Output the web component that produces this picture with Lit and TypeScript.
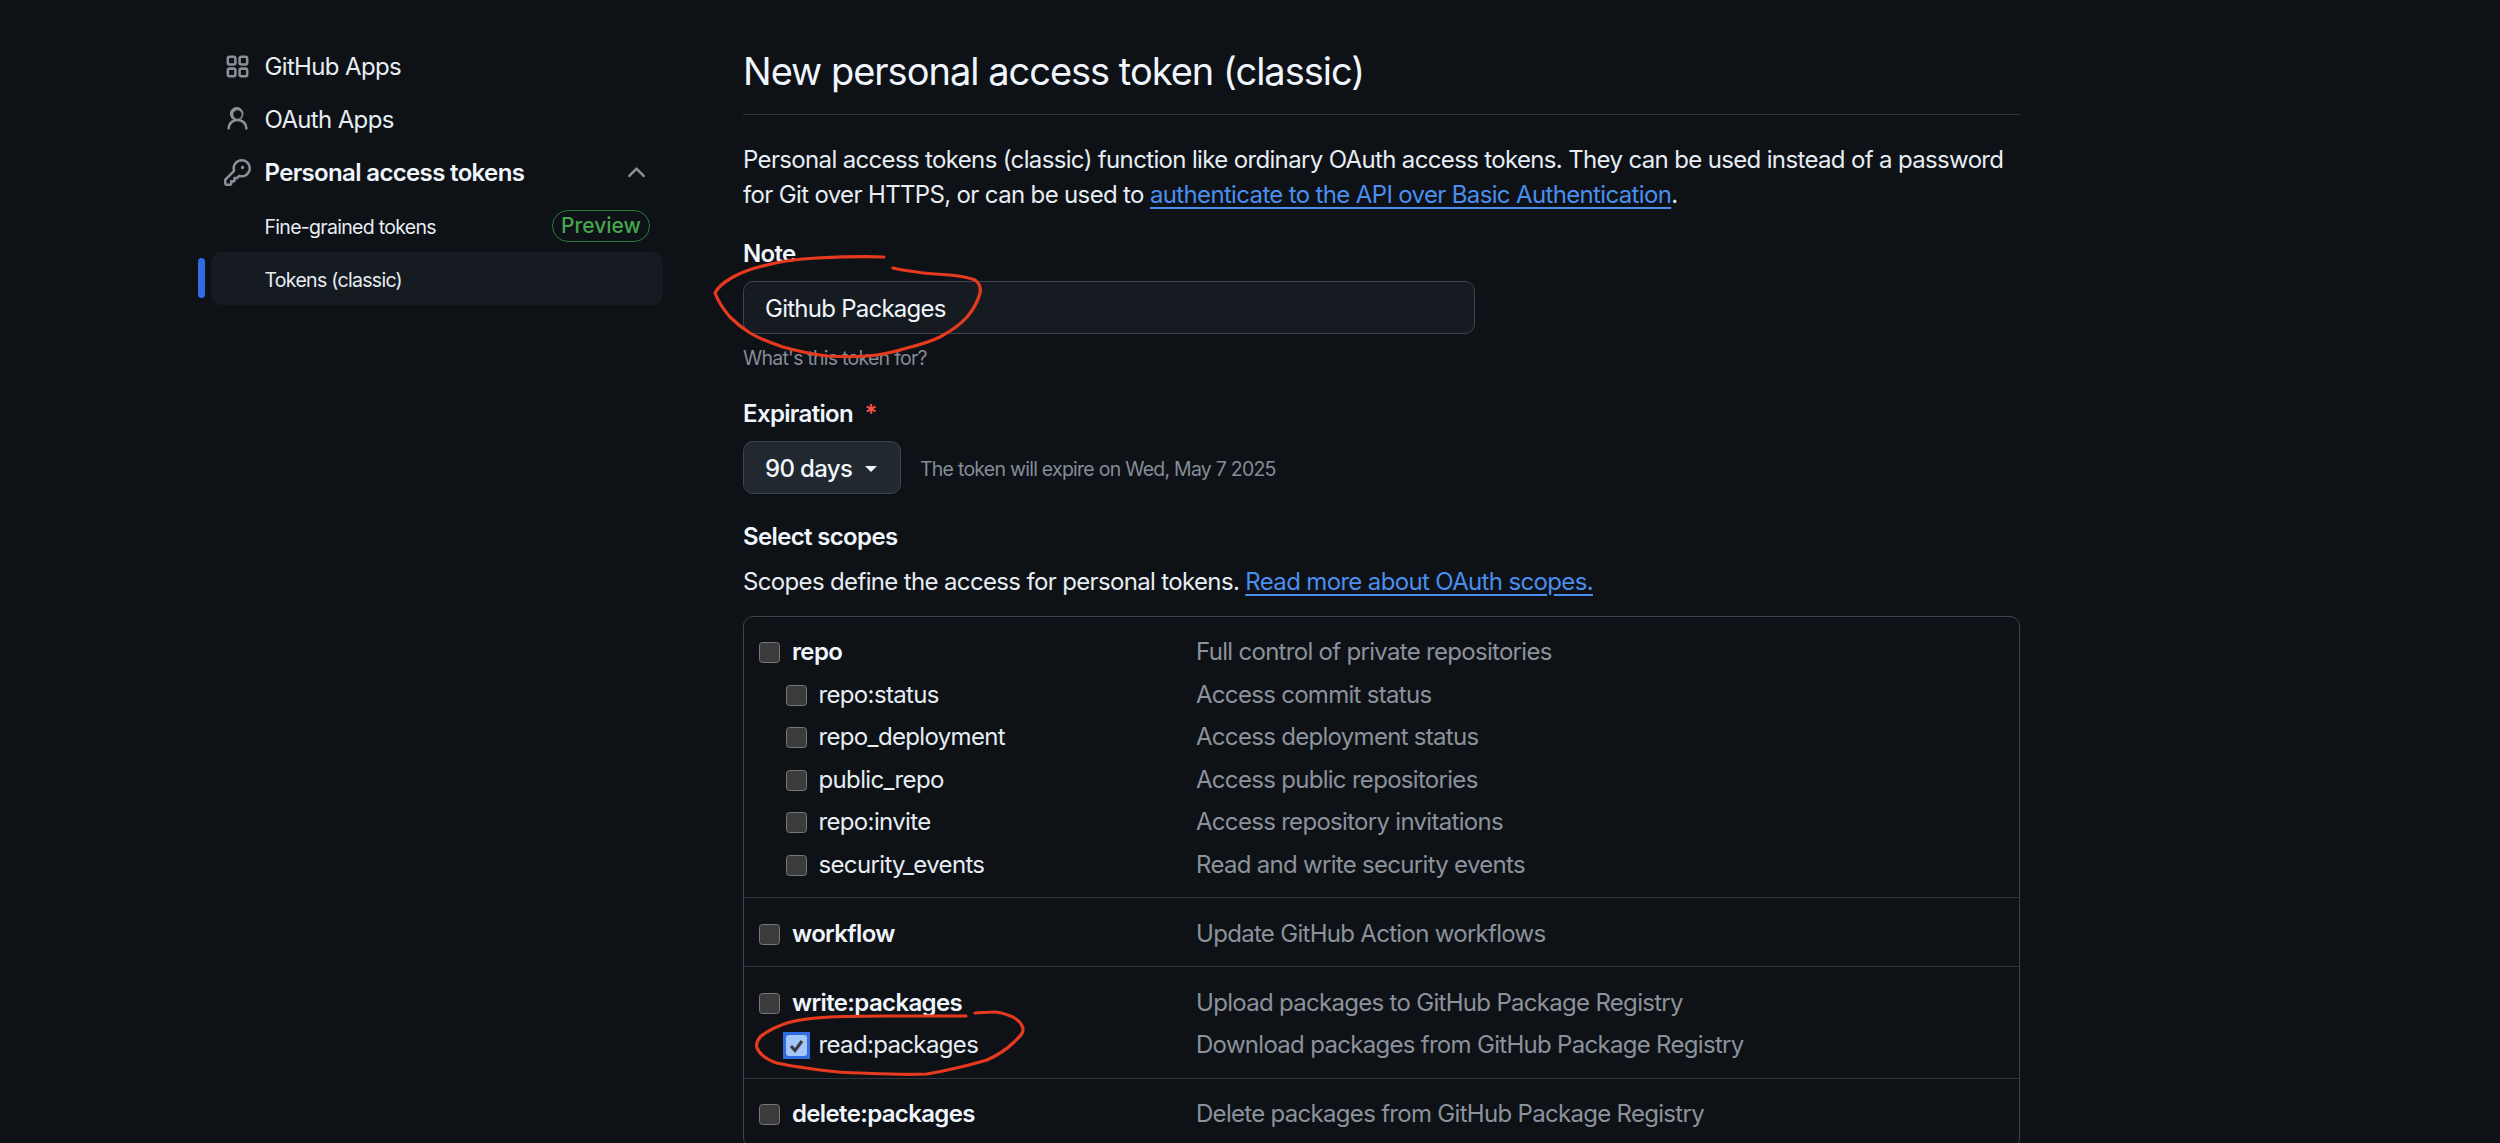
import { html, css, svg, LitElement } from "lit";
import { customElement } from "lit/decorators.js";

const ICONS = {
  apps: "M1.5 3.25c0-.966.784-1.75 1.75-1.75h2.5c.966 0 1.75.784 1.75 1.75v2.5A1.75 1.75 0 0 1 5.75 7.5h-2.5A1.75 1.75 0 0 1 1.5 5.75Zm7 0c0-.966.784-1.75 1.75-1.75h2.5c.966 0 1.75.784 1.75 1.75v2.5a1.75 1.75 0 0 1-1.75 1.75h-2.5A1.75 1.75 0 0 1 8.5 5.75Zm-7 7c0-.966.784-1.75 1.75-1.75h2.5c.966 0 1.75.784 1.75 1.75v2.5a1.75 1.75 0 0 1-1.75 1.75h-2.5a1.75 1.75 0 0 1-1.75-1.75Zm7 0c0-.966.784-1.75 1.75-1.75h2.5c.966 0 1.75.784 1.75 1.75v2.5a1.75 1.75 0 0 1-1.75 1.75h-2.5a1.75 1.75 0 0 1-1.75-1.75ZM3.25 3a.25.25 0 0 0-.25.25v2.5c0 .138.112.25.25.25h2.5A.25.25 0 0 0 6 5.75v-2.5A.25.25 0 0 0 5.75 3Zm7 0a.25.25 0 0 0-.25.25v2.5c0 .138.112.25.25.25h2.5a.25.25 0 0 0 .25-.25v-2.5a.25.25 0 0 0-.25-.25ZM3 10.25v2.5c0 .138.112.25.25.25h2.5a.25.25 0 0 0 .25-.25v-2.5a.25.25 0 0 0-.25-.25h-2.5a.25.25 0 0 0-.25.25Zm7.25-.25a.25.25 0 0 0-.25.25v2.5c0 .138.112.25.25.25h2.5a.25.25 0 0 0 .25-.25v-2.5a.25.25 0 0 0-.25-.25Z",
  person: "M10.561 8.073a6.005 6.005 0 0 1 3.432 5.142.75.75 0 1 1-1.498.07 4.5 4.5 0 0 0-8.99 0 .75.75 0 0 1-1.498-.07 6.004 6.004 0 0 1 3.431-5.142 3.999 3.999 0 1 1 4.123 0ZM10.5 5a2.5 2.5 0 1 0-5 0 2.5 2.5 0 0 0 5 0Z",
  key: "M10.5 0a5.499 5.499 0 1 1-1.288 10.848l-.932.932a.749.749 0 0 1-.53.22H7v.75a.749.749 0 0 1-.22.53l-.5.5a.749.749 0 0 1-.53.22H5v.75a.749.749 0 0 1-.22.53l-.5.5a.749.749 0 0 1-.53.22h-2A1.75 1.75 0 0 1 0 14.25v-2c0-.199.079-.389.22-.53l4.932-4.932A5.5 5.5 0 0 1 10.5 0Zm-4 5.5c-.001.431.069.86.205 1.269a.75.75 0 0 1-.181.768L1.5 12.56v1.69c0 .138.112.25.25.25h1.69l.06-.06v-1.19a.75.75 0 0 1 .75-.75h1.19l.06-.06v-1.19a.75.75 0 0 1 .75-.75h1.19l1.023-1.025a.75.75 0 0 1 .768-.18A4 4 0 1 0 6.5 5.5ZM11 6a1 1 0 1 1 0-2 1 1 0 0 1 0 2Z",
  chevron: "M3.22 10.53a.749.749 0 0 1 0-1.06l4.25-4.25a.749.749 0 0 1 1.06 0l4.25 4.25a.749.749 0 1 1-1.06 1.06L8 6.811 4.28 10.53a.749.749 0 0 1-1.06 0Z",
};

type Scope = { name: string; desc: string; sub?: boolean; checked?: boolean };

const GROUPS: Scope[][] = [
  [
    { name: "repo", desc: "Full control of private repositories" },
    { name: "repo:status", desc: "Access commit status", sub: true },
    { name: "repo_deployment", desc: "Access deployment status", sub: true },
    { name: "public_repo", desc: "Access public repositories", sub: true },
    { name: "repo:invite", desc: "Access repository invitations", sub: true },
    { name: "security_events", desc: "Read and write security events", sub: true },
  ],
  [{ name: "workflow", desc: "Update GitHub Action workflows" }],
  [
    { name: "write:packages", desc: "Upload packages to GitHub Package Registry" },
    { name: "read:packages", desc: "Download packages from GitHub Package Registry", sub: true, checked: true },
  ],
  [{ name: "delete:packages", desc: "Delete packages from GitHub Package Registry" }],
];

const icon = (d: string) => html`<svg class="icon" viewBox="0 0 16 16" aria-hidden="true"><path d=${d}></path></svg>`;

@customElement("app-root")
export class AppRoot extends LitElement {
  static styles = css`
    :host {
      display: block;
      position: relative;
      height: 1143px;
      overflow: hidden;
      background: #0e1116;
      color: #f0f6fc;
      font-family: Inter, "Liberation Sans", sans-serif;
      font-size: 24px;
      letter-spacing: -0.65px;
    }

    .page {
      display: flex;
      gap: 80px;
      padding-left: 198px;
    }

    /* sidebar */
    .side {
      width: 465px;
      flex: none;
      padding-top: 40px;
    }
    .nav-row {
      display: flex;
      align-items: center;
      gap: 13.5px;
      height: 53px;
      margin-left: 13px;
      padding: 0 13px;
      border-radius: 10px;
      color: #e6edf3;
      box-sizing: border-box;
    }
    .nav-row .icon {
      width: 27px;
      height: 27px;
      flex: none;
      fill: #8b8f96;
    }
    .nav-row.open {
      font-weight: 600;
      color: #f0f6fc;
    }
    .nav-row .chevron {
      margin-left: auto;
    }
    .sub {
      font-size: 19.5px;
      padding-left: 53.5px;
      letter-spacing: -0.7px;
    }
    .sub .txt {
      padding-top: 2px;
    }
    .badge {
      margin-left: auto;
      height: 32px;
      width: 98px;
      box-sizing: border-box;
      border: 1.5px solid #2c7a39;
      border-radius: 16px;
      color: #46a64f;
      font-size: 21px;
      letter-spacing: 0;
      font-weight: 500;
      display: flex;
      align-items: center;
      justify-content: center;
    }
    .sub-wrap {
      position: relative;
    }
    .active {
      background: #161b22;
    }
    .marker {
      position: absolute;
      left: 0;
      top: 6px;
      width: 7px;
      height: 40px;
      border-radius: 4px;
      background: #2f6de0;
    }

    /* main column */
    .main {
      width: 1277px;
      flex: none;
      padding-top: 46px;
    }
    h1 {
      margin: 0;
      font-size: 38px;
      letter-spacing: -1px;
      font-weight: 400;
      line-height: 50px;
      padding-bottom: 18px;
      border-bottom: 1.5px solid #30363d;
    }
    p {
      margin: 27px 0 0;
      line-height: 35px;
      color: #e6edf3;
    }
    p.intro {
      margin-top: 11px;
    }
    a {
      color: #4a8fee;
      text-decoration: underline;
      text-underline-offset: 4px;
    }
    .label {
      font-weight: 600;
      line-height: 32px;
      padding-top: 3px;
      margin-top: 23px;
    }
    .label.next {
      margin-top: 24px;
    }
    .input {
      margin-top: 11px;
      width: 732px;
      height: 53px;
      box-sizing: border-box;
      padding: 2px 21px 0;
      display: flex;
      align-items: center;
      background: #161b22;
      border: 1.5px solid #3d444d;
      border-radius: 10px;
      letter-spacing: -0.75px;
    }
    .help {
      margin-top: 9px;
      padding-top: 2px;
      line-height: 26px;
      font-size: 19.5px;
      letter-spacing: -0.75px;
      color: #848d97;
    }
    .req {
      color: #f85149;
      margin-left: 6px;
    }
    .expiry {
      margin-top: 11px;
      display: flex;
      align-items: center;
      gap: 19px;
    }
    .select {
      width: 158px;
      height: 53px;
      box-sizing: border-box;
      padding: 2px 21px 0;
      display: flex;
      align-items: center;
      gap: 13px;
      white-space: nowrap;
      background: #212830;
      border: 1.5px solid #3d444d;
      border-radius: 10px;
      font-weight: 500;
    }
    .caret {
      width: 0;
      height: 0;
      border: 6.5px solid transparent;
      border-top-color: #f0f6fc;
      border-bottom: 0;
    }
    .expiry .help {
      margin-top: 0;
    }

    /* scopes table */
    .scopes {
      margin-top: 16.5px;
      border: 1.5px solid #3d444d;
      border-radius: 10px;
    }
    .group {
      padding: 14px 0 11.5px;
      border-top: 1.5px solid #30363d;
    }
    .group:first-child {
      border-top: 0;
    }
    .scope {
      display: grid;
      grid-template-columns: 437px 1fr;
      height: 42.5px;
      align-items: center;
      padding-left: 15px;
      color: #e6edf3;
    }
    .scope .name {
      display: flex;
      align-items: center;
      gap: 12px;
      font-weight: 600;
      color: #f0f6fc;
    }
    .scope.sub-scope .name {
      padding-left: 26.5px;
      font-weight: 400;
      color: #e6edf3;
    }
    .desc {
      color: #8b929b;
      letter-spacing: -0.7px;
    }
    .box {
      width: 21px;
      height: 21px;
      box-sizing: border-box;
      flex: none;
      margin-top: 2px;
      background: #3b3b3b;
      border: 1.5px solid #777;
      border-radius: 3.5px;
    }
    .box.checked {
      background: #2f6de0;
      border: 0;
      border-radius: 0;
      outline: 3.5px solid #2f6de0;
    }
    .box.checked svg {
      display: block;
      width: 21px;
      height: 21px;
    }

    /* hand-drawn marks */
    .marks {
      position: absolute;
      inset: 0;
      width: 2500px;
      height: 1143px;
      pointer-events: none;
      fill: none;
      stroke: #e63a1f;
      stroke-width: 3.2;
      stroke-linecap: round;
      stroke-linejoin: round;
    }
  `;

  renderScope(s: Scope) {
    return html`
      <div class="scope ${s.sub ? "sub-scope" : ""}">
        <div class="name">
          <span class="box ${s.checked ? "checked" : ""}">
            ${s.checked
              ? html`<svg viewBox="0 0 21 21">
                  <rect width="21" height="21" rx="3" fill="#a4c7fb"></rect>
                  <path d="M5 11l4 4.5 7-9.5" fill="none" stroke="#3b3b3b" stroke-width="3"></path>
                </svg>`
              : ""}
          </span>
          ${s.name}
        </div>
        <div class="desc">${s.desc}</div>
      </div>
    `;
  }

  render() {
    return html`
      <div class="page">
        <nav class="side">
          <div class="nav-row">${icon(ICONS.apps)}GitHub Apps</div>
          <div class="nav-row">${icon(ICONS.person)}OAuth Apps</div>
          <div class="nav-row open">
            ${icon(ICONS.key)}Personal access tokens
            <svg class="icon chevron" viewBox="0 0 16 16"><path d=${ICONS.chevron}></path></svg>
          </div>
          <div class="nav-row sub"><span class="txt">Fine-grained tokens</span><span class="badge">Preview</span></div>
          <div class="sub-wrap">
            <span class="marker"></span>
            <div class="nav-row sub active"><span class="txt">Tokens (classic)</span></div>
          </div>
        </nav>
        <main class="main">
          <h1>New personal access token (classic)</h1>
          <p>
            Personal access tokens (classic) function like ordinary OAuth access tokens. They can be used instead of a
            password<br />for Git over HTTPS, or can be used to
            <a>authenticate to the API over Basic Authentication</a>.
          </p>
          <div class="label">Note</div>
          <div class="input">Github Packages</div>
          <div class="help">What's this token for?</div>
          <div class="label next">Expiration <span class="req">*</span></div>
          <div class="expiry">
            <div class="select">90 days<span class="caret"></span></div>
            <div class="help">The token will expire on Wed, May 7 2025</div>
          </div>
          <div class="label next">Select scopes</div>
          <p class="intro">Scopes define the access for personal tokens. <a>Read more about OAuth scopes.</a></p>
          <div class="scopes">
            ${GROUPS.map((g) => html`<div class="group">${g.map((s) => this.renderScope(s))}</div>`)}
          </div>
        </main>
      </div>
      <svg class="marks" viewBox="0 0 2500 1143">
        ${svg`<path d="M884 257C860 256 838 257 817 258C798 259 782 261 767 265C754 268 742 272 733 277C724 282 718 287 715 293C718 301 723 309 730 317C736 323 742 328 750 333C760 339 771 343 783 347C797 351 812 354 827 356C841 357 854 357 867 356C881 355 894 352 907 348C919 345 930 342 940 337C951 331 960 325 967 317C973 310 978 301 980 293C981 288 979 283 975 280C968 277 959 276 950 275C939 274 928 274 917 272C908 271 900 270 893 268"></path>
        <path d="M966 1016C940 1016 915 1016 887 1016C865 1016 848 1016 830 1017C812 1018 800 1019 787 1023C775 1027 767 1031 760 1037C757 1041 756 1045 757 1048C760 1055 768 1060 777 1063C790 1066 805 1068 820 1070C835 1072 847 1073 860 1073C885 1074 905 1075 927 1074C950 1070 970 1065 987 1060C998 1055 1006 1050 1013 1043C1019 1037 1023 1034 1023 1030C1023 1024 1018 1020 1013 1017C1006 1014 1000 1012 993 1012C986 1012 981 1013 975 1013"></path>`}
      </svg>
    `;
  }
}
